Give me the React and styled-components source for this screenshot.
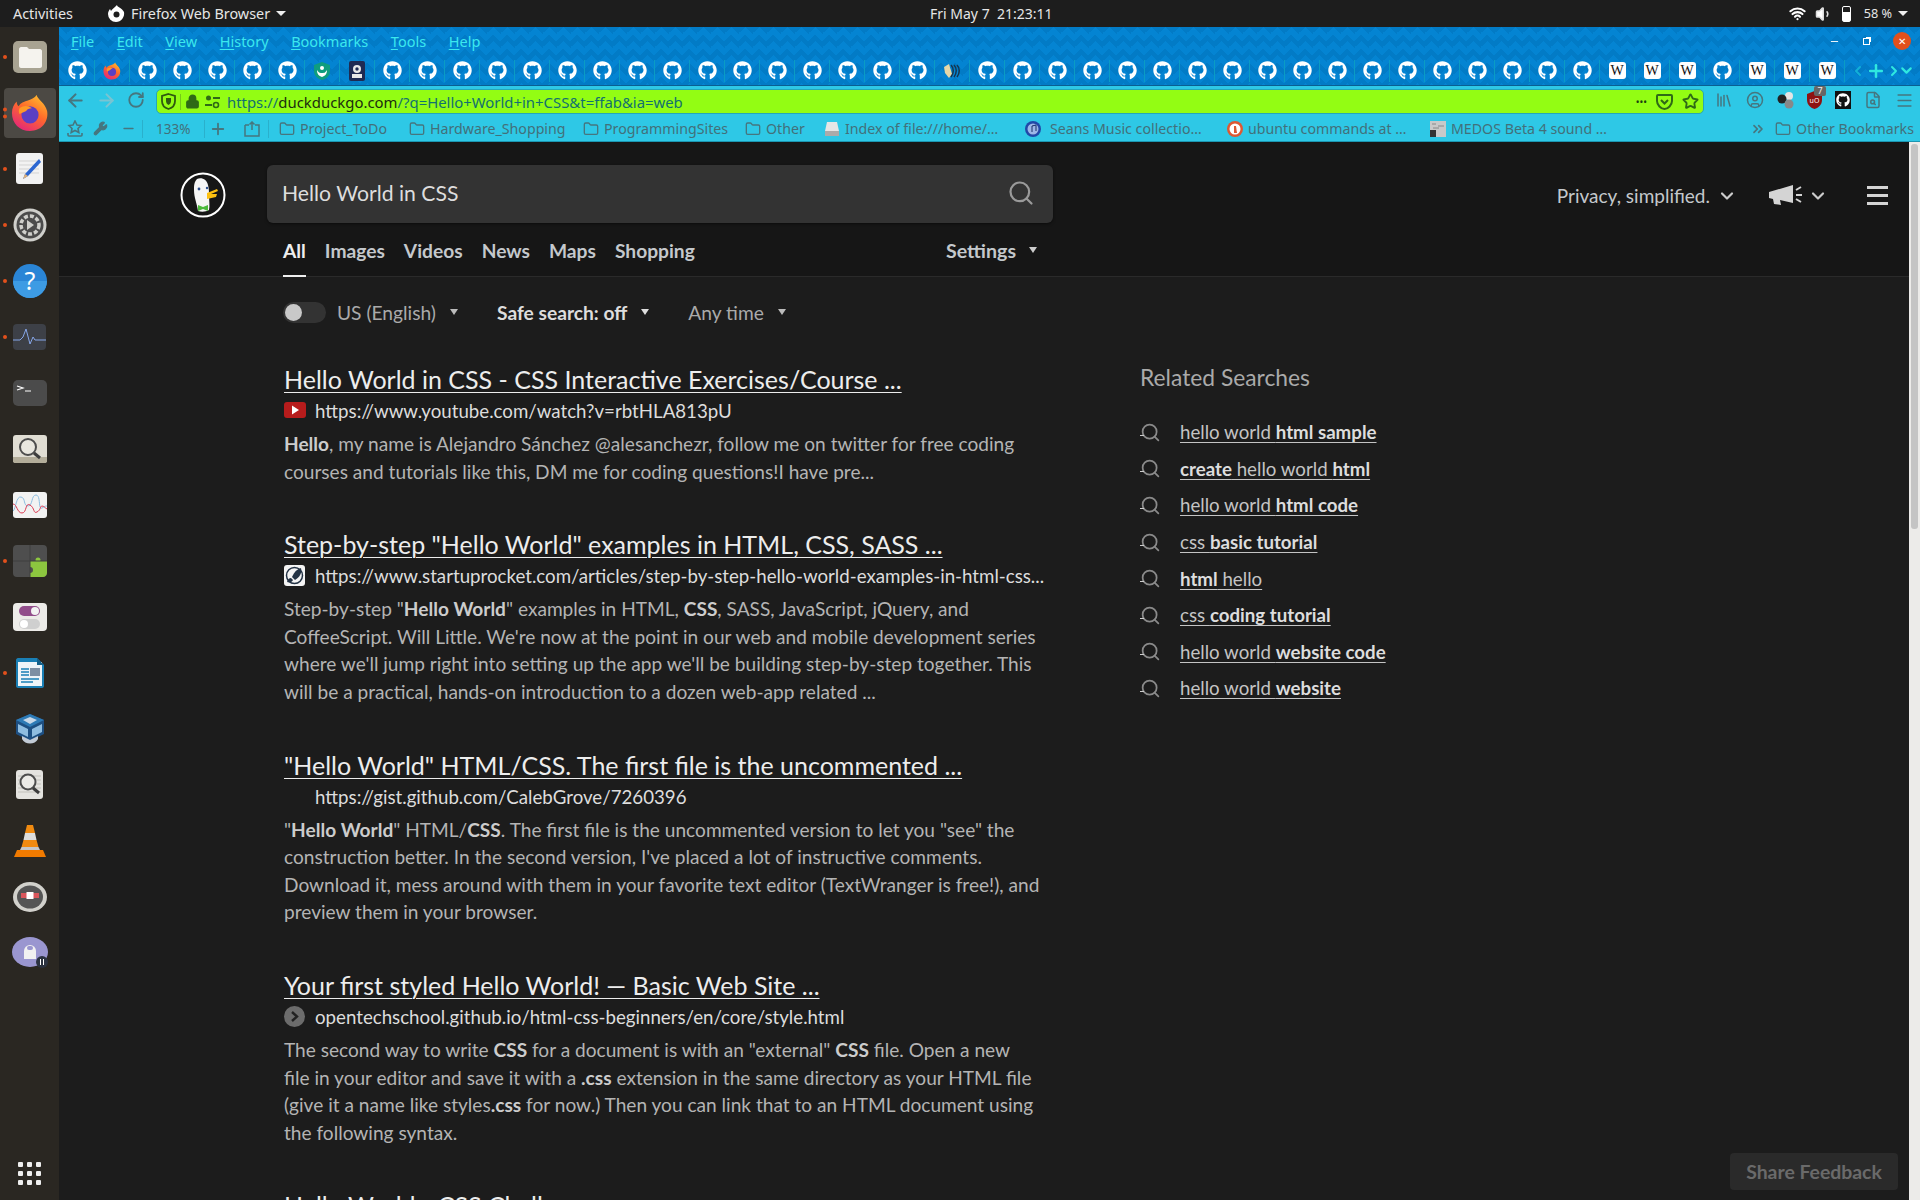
import styled, { createGlobalStyle } from 'styled-components';
import { FaGithub } from 'react-icons/fa';
import {
    ArrowLeft, ArrowRight, RotateCw, Lock, Star, Menu, Search, ChevronDown, ChevronLeft, ChevronRight,
    ChevronsRight, Minus, Plus, Folder, Wrench, Volume1, Wifi, UserCircle, FileSearch, Library
} from 'lucide-react';

const UI_FONT = `"Noto Sans", "Open Sans", sans-serif`;
const PAGE_FONT = `Lato, "Open Sans", sans-serif`;

const Global = createGlobalStyle`
    html, body { margin: 0; padding: 0; height: 1200px; overflow: hidden; background: #1c1c1c; }
    * { box-sizing: border-box; }
`;

/* ---------- data ---------- */

const tabs = [
    'g','ff','g','g','g','g','g','shield','lock','g','g','g','g','g','g','g','g','g','g','g','g','g','g','g','g',
    'steem','g','g','g','g','g','g','g','g','g','g','g','g','g','g','g','g','g','g','w','w','w','g','w','w','w'
];

const folders = [
    { kind: 'folder', label: 'Project_ToDo', width: 130 },
    { kind: 'folder', label: 'Hardware_Shopping', width: 174 },
    { kind: 'folder', label: 'ProgrammingSites', width: 162 },
    { kind: 'folder', label: 'Other', width: 79 },
    { kind: 'disk', label: 'Index of file:///home/…', width: 201 },
    { kind: 'itunes', label: 'Seans Music collectio…', width: 202, gap: 9 },
    { kind: 'ddg', label: 'ubuntu commands at …', width: 203 },
    { kind: 'medos', label: 'MEDOS Beta 4 sound …', width: 190 },
];

const results = [
    {
        title: 'Hello World in CSS - CSS Interactive Exercises/Course ...',
        url: 'https://www.youtube.com/watch?v=rbtHLA813pU',
        icon: 'yt',
        lines: [
            <><b>Hello</b>, my name is Alejandro Sánchez @alesanchezr, follow me on twitter for free coding</>,
            <>courses and tutorials like this, DM me for coding questions!I have pre...</>,
        ],
    },
    {
        title: 'Step-by-step "Hello World" examples in HTML, CSS, SASS ...',
        url: 'https://www.startuprocket.com/articles/step-by-step-hello-world-examples-in-html-css...',
        icon: 'rocket',
        lines: [
            <>Step-by-step "<b>Hello World</b>" examples in HTML, <b>CSS</b>, SASS, JavaScript, jQuery, and</>,
            <>CoffeeScript. Will Little. We're now at the point in our web and mobile development series</>,
            <>where we'll jump right into setting up the app we'll be building step-by-step together. This</>,
            <>will be a practical, hands-on introduction to a dozen web-app related ...</>,
        ],
    },
    {
        title: '"Hello World" HTML/CSS. The first file is the uncommented ...',
        url: 'https://gist.github.com/CalebGrove/7260396',
        icon: null,
        lines: [
            <>"<b>Hello World</b>" HTML/<b>CSS</b>. The first file is the uncommented version to let you "see" the</>,
            <>construction better. In the second version, I've placed a lot of instructive comments.</>,
            <>Download it, mess around with them in your favorite text editor (TextWranger is free!), and</>,
            <>preview them in your browser.</>,
        ],
    },
    {
        title: 'Your first styled Hello World! — Basic Web Site ...',
        url: 'opentechschool.github.io/html-css-beginners/en/core/style.html',
        icon: 'ots',
        lines: [
            <>The second way to write <b>CSS</b> for a document is with an "external" <b>CSS</b> file. Open a new</>,
            <>file in your editor and save it with a <b>.css</b> extension in the same directory as your HTML file</>,
            <>(give it a name like styles<b>.css</b> for now.) Then you can link that to an HTML document using</>,
            <>the following syntax.</>,
        ],
    },
];

const related = [
    <>hello world <b>html sample</b></>,
    <><b>create</b> hello world <b>html</b></>,
    <>hello world <b>html code</b></>,
    <>css <b>basic tutorial</b></>,
    <><b>html</b> hello</>,
    <>css <b>coding tutorial</b></>,
    <>hello world <b>website code</b></>,
    <>hello world <b>website</b></>,
];

/* ---------- drawings ---------- */

const FirefoxLogo = ({ size = 40 }) => (
    <svg width={size} height={size} viewBox="0 0 40 40">
        <defs>
            <linearGradient id="ffg" x1="0.8" y1="0" x2="0.2" y2="1">
                <stop offset="0" stopColor="#ffbd2e" />
                <stop offset="0.45" stopColor="#ff6a2b" />
                <stop offset="1" stopColor="#e3217f" />
            </linearGradient>
        </defs>
        <path d="M27 1c1 5 9 8 11 17 2 11-6 21-18 21C9 39 1 31 1 20c0-5 2-9 5-12 0 3 1 4 2 5 2-4 6-5 9-6 4-1 8-3 10-6z" fill="url(#ffg)" />
        <circle cx="20" cy="22" r="9" fill="#5b3fc4" />
        <path d="M9 15c4-3 9-3 13 0-3 0-5 1-6 3l-7 3c-1-2-1-4 0-6z" fill="#ff9a26" />
    </svg>
);

const DuckLogo = () => (
    <svg width="46" height="46" viewBox="0 0 46 46">
        <ellipse cx="23" cy="23" rx="21.5" ry="21.5" fill="#161616" stroke="#fff" strokeWidth="2" />
        <path d="M17 7c5-2 10 1 11 6 1 4 1 7 1 10 0 5 1 11 0 15-3 2-8 2-11 1-1-8-4-13-4-21 0-4 0-8 3-11z" fill="#f5f5f5" />
        <circle cx="19" cy="17" r="1.4" fill="#2d4f8e" />
        <circle cx="27" cy="16" r="1.2" fill="#2d4f8e" />
        <path d="M27 21l10-4 1 2-7 3 6 0-1 3-9 2z" fill="#fdc010" />
        <path d="M18 33l5 2 5-2v6l-5-2-5 2z" fill="#4cba3c" />
    </svg>
);

const GsIcon = styled.div`
    width: 34px;
    height: ${p => p.$h || 32}px;
    border-radius: 5px;
    background: ${p => p.$bg};
    display: flex;
    align-items: center;
    justify-content: center;
`;

const dockApps = [
    { dots: 1, el: <GsIcon $bg="#a8a392"><svg width="24" height="21" viewBox="0 0 24 21"><path d="M1 2c0-1 1-2 2-2h6l2 2h11c1 0 2 1 2 2v15c0 1-1 2-2 2H3c-1 0-2-1-2-2z" fill="#f5f3ee" /></svg></GsIcon> },
    { dots: 2, active: true, el: <FirefoxLogo size={38} /> },
    { dots: 1, el: <svg width="28" height="32" viewBox="0 0 28 32"><rect width="27" height="31" rx="3" fill="#f2f2f2" /><path d="M3 8h20M3 12h20M3 16h20M3 20h20" stroke="#d3d3d3" /><path d="M23 6l2 3-13 14-5 3 2-5z" fill="#2b66d1" /><path d="M7 26l2-5 3 2z" fill="#e0b27a" /></svg> },
    { dots: 1, el: <svg width="34" height="34" viewBox="0 0 34 34"><circle cx="17" cy="17" r="16.500" fill="#cfcfcb" /><circle cx="17" cy="17" r="13.500" fill="#4b4b4b" /><circle cx="17" cy="17" r="9" fill="none" stroke="#cfcfcb" strokeWidth="3.500" strokeDasharray="4 2" /><path d="M14 12l7 5-7 5z" fill="#cfcfcb" /></svg> },
    { dots: 1, el: <svg width="34" height="34" viewBox="0 0 34 34"><circle cx="17" cy="17" r="17" fill="#2a85d6" /><path d="M0 17a17 17 0 0 0 34 0z" fill="#3d9be4" /><text x="17" y="26" textAnchor="middle" fill="#fff" fontSize="25" fontFamily="Noto Sans">?</text></svg> },
    { dots: 1, el: <svg width="34" height="26" viewBox="0 0 34 26"><rect width="33" height="26" rx="4" fill="#3d4047" /><path d="M0 16h7l3-3 3-8 4 15 3-7 2 3h11" fill="none" stroke="#86a6e8" strokeWidth="1" /></svg> },
    { dots: 0, el: <GsIcon $bg="#4b4b4b" $h={26}><svg width="28" height="22" viewBox="0 0 28 22"><path d="M1 4l6 2-6 2M9 9h6" stroke="#fff" fill="none" strokeWidth="1.200" /></svg></GsIcon> },
    { dots: 0, el: <svg width="34" height="28" viewBox="0 0 34 28"><rect width="34" height="28" rx="3" fill="#e0ddd3" /><path d="M0 22h34v4c0 1-1 2-2 2H2c-1 0-2-1-2-2z" fill="#b3ad9a" /><circle cx="15" cy="12" r="8" fill="#e9e7df" stroke="#4d4d4d" strokeWidth="2" /><path d="M21 18l6 5" stroke="#3c3c3c" strokeWidth="3" /></svg> },
    { dots: 0, el: <svg width="34" height="26" viewBox="0 0 34 26"><rect width="34" height="26" rx="3" fill="#f2f2f2" /><path d="M0 19c3-2 3-15 8-14s2 9 7 9 3-11 8-11 2 15 6 13 3-2 5-2" fill="none" stroke="#8bbde0" /><path d="M0 12c4 0 4 9 9 9s3-11 8-8 3 9 7 7 3-6 5-6 3 2 5 3" fill="none" stroke="#dc3a52" /></svg> },
    { dots: 1, el: <svg width="34" height="32" viewBox="0 0 34 32"><rect width="34" height="32" rx="4" fill="#4e4e4e" /><path d="M17 16h17v12c0 2-2 4-4 4H17v-4a3 3 0 0 0 0-6z" fill="#8cc63f" /><circle cx="25" cy="15" r="2.500" fill="#8cc63f" /><path d="M0 16h34M17 0v32" stroke="#3e3e3e" /></svg> },
    { dots: 0, el: <svg width="34" height="28" viewBox="0 0 34 28"><rect width="34" height="28" rx="4" fill="#ecebe8" /><rect x="6" y="3" width="21" height="10" rx="5" fill="#924d8b" /><circle cx="22" cy="8" r="4" fill="#f3f3f3" /><rect x="6" y="16" width="21" height="10" rx="5" fill="#cfcfcf" /><circle cx="11" cy="21" r="4" fill="#fff" /></svg> },
    { dots: 1, el: <svg width="28" height="30" viewBox="0 0 28 30"><path d="M2 0h19l7 7v21c0 1-1 2-2 2H2c-1 0-2-1-2-2V2C0 1 1 0 2 0z" fill="#1a7fb5" /><rect x="2" y="4" width="24" height="24" fill="#eef4f8" /><path d="M21 0l7 7h-7z" fill="#14608a" /><path d="M5 11h8M5 14h8M5 17h8M5 21h18M5 24h12" stroke="#1a7fb5" strokeWidth="1.500" /><rect x="14" y="10" width="10" height="8" fill="#7d8fa3" /></svg> },
    { dots: 0, el: <svg width="32" height="32" viewBox="0 0 32 32"><path d="M16 1l14 6v14l-14 7-14-7V7z" fill="#1d4f82" /><path d="M2 7l14 7 14-7-14-6z" fill="#2d7ab5" /><path d="M16 4l7 3-7 4-7-4z" fill="#c8d8e8" /><path d="M4 11l10 5v8l-10-5zM18 16l10-5v8l-10 5z" fill="#8fbde0" /><path d="M8 26c3 6 13 6 16 0v-3l-8 4-8-4z" fill="#c2cbd6" /></svg> },
    { dots: 0, el: <svg width="28" height="30" viewBox="0 0 28 30"><rect width="27" height="29" rx="3" fill="#e4e3df" /><path d="M2 6h23M2 10h23M2 14h23M2 18h23M2 22h23" stroke="#c2c1bb" /><circle cx="12" cy="12" r="7.500" fill="#ecebe7" stroke="#4d4d4d" strokeWidth="2" /><path d="M17 18l6 5" stroke="#3c3c3c" strokeWidth="3" /></svg> },
    { dots: 0, el: <svg width="32" height="32" viewBox="0 0 32 32"><path d="M13 0h6l2 8H11z" fill="#f08a10" /><path d="M11 8h10l1.500 7h-13z" fill="#ddd" /><path d="M9.500 15h13l2 7h-17z" fill="#f08a10" /><path d="M7.500 22h17l1.500 3H6z" fill="#c6c6c6" /><path d="M3 25h26l3 7H0z" fill="#f07a00" /></svg> },
    { dots: 0, el: <svg width="34" height="30" viewBox="0 0 34 30"><ellipse cx="17" cy="15" rx="17" ry="15" fill="#d2d1cc" /><ellipse cx="17" cy="15" rx="13" ry="11.500" fill="#555" /><path d="M8 11h18v5H8z" fill="#d9575c" /><rect x="13.500" y="10" width="7" height="7" fill="#fff" /></svg> },
    { dots: 0, el: <svg width="36" height="32" viewBox="0 0 36 32"><ellipse cx="18" cy="15" rx="18" ry="15" fill="#9a96d0" /><path d="M12 14a6 6 0 0 1 12 0v8H12z" fill="#f1f1f1" /><rect x="15" y="9" width="6" height="4" rx="2" fill="#9a96d0" /><circle cx="30" cy="25" r="6" fill="#2b3240" /><path d="M28.500 28v-6M31.500 22v6" stroke="#fff" /></svg> },
];

/* ---------- components ---------- */

function TopPanel() {
    return (
        <Panel>
            <PanelLeft>
                <PanelText>Activities</PanelText>
                <AppMenu>
                    <svg width="17" height="17" viewBox="0 0 17 17"><path d="M9 0c0 2 5 3 7 7 1 5-3 10-8 10a8 8 0 0 1-8-8c0-2 1-4 2-5l1 2c1-2 3-3 6-6z" fill="#fff" /><circle cx="8.500" cy="9.500" r="3" fill="#1d1d1d" /></svg>
                    <PanelText>Firefox Web Browser</PanelText>
                    <Caret />
                </AppMenu>
            </PanelLeft>
            <Clock>Fri May 7&nbsp; 21:23:11</Clock>
            <PanelRight>
                <Wifi size={17} color="#fff" strokeWidth={3} />
                <Volume1 size={18} color="#ddd" fill="#fff" />
                <BatteryBody><BatteryLevel /></BatteryBody>
                <PanelText $small>58 %</PanelText>
                <Caret />
            </PanelRight>
        </Panel>
    );
}

function Dock() {
    return (
        <DockBar>
            {dockApps.map((a, i) =>
                <DockItem key={i} $active={a.active}>
                    <Dots>{Array.from({ length: a.dots }).map((_, j) => <Dot key={j} />)}</Dots>
                    {a.el}
                </DockItem>
            )}
            <AppsGrid>{Array.from({ length: 9 }).map((_, i) => <i key={i} />)}</AppsGrid>
        </DockBar>
    );
}

function TabIcon({ kind }) {
    if (kind === 'g') return <FaGithub size={19} color="#fff" />;
    if (kind === 'ff') return <FirefoxLogo size={18} />;
    if (kind === 'w') return <WikiIcon>W</WikiIcon>;
    if (kind === 'shield') return <svg width="16" height="18" viewBox="0 0 16 18"><path d="M8 0l8 3v6c0 5-4 8-8 9-4-1-8-4-8-9V3z" fill="#0f9d7e" /><circle cx="8" cy="6" r="2" fill="#fff" /><path d="M3 8c2 3 3 3 5 3s3 0 5-3c0 4-2 6-5 7-3-1-5-3-5-7z" fill="#fff" /></svg>;
    if (kind === 'lock') return <svg width="16" height="20" viewBox="0 0 16 20"><rect width="16" height="20" rx="2" fill="#1f2a52" /><circle cx="8" cy="8" r="4" fill="#e8e8e8" /><circle cx="8" cy="8" r="1.700" fill="#1f2a52" /><rect x="3" y="13" width="10" height="4" fill="#e8e8e8" /></svg>;
    return <svg width="18" height="18" viewBox="0 0 18 18"><path d="M1 5l5-3 3 10-3 4-4-5z" fill="#e5d7a8" /><path d="M8 3c3 3 3 8 0 12M11 3c3 3 3 8 0 12M14 3c3 3 3 8 0 12" stroke="#17364f" strokeWidth="1.500" fill="none" /></svg>;
}

function TitleRow() {
    return (
        <MenuBar>
            <MenuList>
                {[['F', 'ile'], ['E', 'dit'], ['V', 'iew'], ['Hi', 'story'], ['B', 'ookmarks'], ['T', 'ools'], ['H', 'elp']].map(([a, b]) =>
                    <MenuItem key={b}><u>{a}</u>{b}</MenuItem>
                )}
            </MenuList>
            <WinButtons>
                <Minus size={11} color="#fff" />
                <RestoreIcon />
                <CloseBtn>✕</CloseBtn>
            </WinButtons>
        </MenuBar>
    );
}

function TabStrip() {
    return (
        <Tabs>
            {tabs.map((t, i) => <TabCell key={i}><TabIcon kind={t} /></TabCell>)}
            <TabTools>
                <ChevronLeft size={16} color="#12b0d8" strokeWidth={3} />
                <Plus size={20} color="#2fe8e0" strokeWidth={3} />
                <ChevronRight size={16} color="#2fe8e0" strokeWidth={3} />
                <ChevronDown size={17} color="#2fe8e0" strokeWidth={3} />
            </TabTools>
        </Tabs>
    );
}

function NavBar() {
    return (
        <Nav>
            <NavButtons>
                <ArrowLeft size={21} color="#46767f" strokeWidth={2.400} />
                <ArrowRight size={21} color="#79c4d2" strokeWidth={2.400} />
                <RotateCw size={18} color="#46767f" strokeWidth={2.400} />
            </NavButtons>
            <UrlBar>
                <svg width="15" height="17" viewBox="0 0 15 17"><path d="M7.500 1L14 3v5c0 4-3 7-6.500 8C4 15 1 12 1 8V3z" fill="none" stroke="#2f5a10" strokeWidth="1.800" /><path d="M5 5h5v3c0 2-1 3-2.500 4C6 11 5 10 5 8z" fill="#2f5a10" /></svg>
                <UrlSep />
                <Lock size={15} color="#2f6a16" fill="#2f6a16" strokeWidth={2.400} />
                <svg width="15" height="15" viewBox="0 0 15 15"><circle cx="3.500" cy="4" r="2.500" fill="#2f6a16" /><path d="M8 4h7M0 11h7" stroke="#2f6a16" strokeWidth="2" /><circle cx="11" cy="11" r="2.500" fill="none" stroke="#2f6a16" strokeWidth="1.600" /></svg>
                <UrlText>https://<b>duckduckgo.com</b>/?q=Hello+World+in+CSS&amp;t=ffab&amp;ia=web</UrlText>
                <UrlEnd>
                    <UrlDots>•••</UrlDots>
                    <svg width="17" height="16" viewBox="0 0 17 16"><path d="M2 1h13c1 0 1 1 1 1v5c0 4-4 8-7.500 8S1 11 1 7V2s0-1 1-1z" fill="none" stroke="#2f6a16" strokeWidth="2" /><path d="M5 6l3.500 3.500L12 6" fill="none" stroke="#2f6a16" strokeWidth="2" /></svg>
                    <Star size={17} color="#2f6a16" strokeWidth={2.600} />
                </UrlEnd>
            </UrlBar>
            <NavRight>
                <Library size={18} color="#46767f" />
                <UserCircle size={18} color="#46767f" />
                <svg width="18" height="18" viewBox="0 0 18 18"><circle cx="12" cy="5" r="4" fill="#e5e5e5" /><circle cx="5" cy="8" r="4.500" fill="#222" /><circle cx="12" cy="13" r="4.500" fill="#888" /></svg>
                <UblockWrap>
                    <svg width="15" height="18" viewBox="0 0 15 18"><path d="M7.500 0L15 3v6c0 5-4 8-7.500 9C4 17 0 14 0 9V3z" fill="#8e1212" /><text x="7.500" y="12" textAnchor="middle" fontSize="7" fill="#fff" fontFamily="Noto Sans">uO</text></svg>
                    <Badge>7</Badge>
                </UblockWrap>
                <GitBox><FaGithub size={14} color="#fff" /></GitBox>
                <FileSearch size={18} color="#46767f" />
                <Menu size={19} color="#46767f" />
            </NavRight>
        </Nav>
    );
}

function BookmarkIcon({ kind }) {
    if (kind === 'folder') return <Folder size={16} color="#46767f" />;
    if (kind === 'disk') return <svg width="16" height="16" viewBox="0 0 16 16"><path d="M3 1h10l2 9H1z" fill="#e6e6e6" /><rect x="1" y="10" width="14" height="5" fill="#aaa" /></svg>;
    if (kind === 'itunes') return <svg width="16" height="16" viewBox="0 0 16 16"><circle cx="8" cy="8" r="8" fill="#2148a8" /><circle cx="8" cy="8" r="5.500" fill="#9db7e8" /><path d="M7 11V5l4-1v6" stroke="#1a2f66" fill="none" /></svg>;
    if (kind === 'ddg') return <svg width="16" height="16" viewBox="0 0 16 16"><circle cx="8" cy="8" r="8" fill="#de5833" /><circle cx="8" cy="8" r="5.500" fill="#fff" /><path d="M7 5h2l1 7H7z" fill="#de5833" /></svg>;
    return <svg width="16" height="16" viewBox="0 0 16 16"><rect width="16" height="16" fill="#c9c9c9" /><path d="M2 3h4M8 5h6M3 7h6" stroke="#888" /><rect y="9" width="6" height="7" fill="#333" /></svg>;
}

function BookmarksBar() {
    return (
        <Bookmarks>
            <BmTools>
                <svg width="16" height="17" viewBox="0 0 16 17"><path d="M8 1l2 4 4 .5-3 3 .8 4L8 10.500 4.200 12.500l.8-4-3-3 4-.5z" fill="none" stroke="#46767f" strokeWidth="1.600" /><path d="M1 13v2c0 1 1 1 1 1h12s1 0 1-1v-2" fill="none" stroke="#46767f" strokeWidth="1.600" /></svg>
                <ToolSlot $ml={10}><Wrench size={15} color="#46767f" fill="#46767f" /></ToolSlot>
                <ToolSlot $ml={13}><Minus size={15} color="#46767f" strokeWidth={2.600} /></ToolSlot>
                <BmSep $ml={6} />
                <ToolSlot $ml={13}><Zoom>133%</Zoom></ToolSlot>
                <BmSep $ml={14} />
                <ToolSlot $ml={4}><Plus size={18} color="#46767f" strokeWidth={2.400} /></ToolSlot>
                <ToolSlot $ml={17}><svg width="16" height="16" viewBox="0 0 16 16"><path d="M1 4h4v-0M11 4h4v11H1V4M8 9V1M5.500 3.500L8 1l2.500 2.500" fill="none" stroke="#46767f" strokeWidth="1.500" /></svg></ToolSlot>
                <BmSep $ml={8} />
            </BmTools>
            {folders.map(f =>
                <Bm key={f.label} $w={f.width} $gap={f.gap}>
                    <BookmarkIcon kind={f.kind} />
                    <span>{f.label}</span>
                </Bm>
            )}
            <BmRight>
                <ChevronsRight size={16} color="#46767f" strokeWidth={2.600} />
                <Bm>
                    <Folder size={16} color="#46767f" />
                    <span>Other Bookmarks</span>
                </Bm>
            </BmRight>
        </Bookmarks>
    );
}

function Favicon({ kind }) {
    if (kind === 'yt') return <svg width="22" height="20" viewBox="0 0 22 20"><rect y="1" width="22" height="16" rx="3" fill="#b71c1c" /><path d="M8 4.500l7 4.500-7 4.500z" fill="#fff" /></svg>;
    if (kind === 'rocket') return <svg width="22" height="22" viewBox="0 0 22 22"><rect width="21" height="21" rx="3" fill="#f4f4f4" /><circle cx="10.500" cy="10.500" r="8" fill="none" stroke="#233244" strokeWidth="1.500" /><path d="M17 3c1 5-1 9-6 12l-3-3c2-5 5-8 9-9z" fill="#233244" /><path d="M3 17c1-3 2-4 4-4l2 2c-1 2-3 3-6 2z" fill="#233244" /></svg>;
    if (kind === 'ots') return <svg width="21" height="21" viewBox="0 0 21 21"><circle cx="10.500" cy="10.500" r="10.500" fill="#6c6c6c" /><path d="M8 6l5 4.500L8 15" fill="none" stroke="#222" strokeWidth="2.400" /></svg>;
    return null;
}

function Result({ r }) {
    return (
        <ResultWrap>
            <ResultTitle>{r.title}</ResultTitle>
            {r.url && <UrlRow><FaviconCell><Favicon kind={r.icon} /></FaviconCell>{r.url}</UrlRow>}
            <Snippet>
                {r.lines.map((l, i) => <SnippetLine key={i}>{l}</SnippetLine>)}
            </Snippet>
        </ResultWrap>
    );
}

function SerpHeader() {
    return (
        <Header>
            <LogoCell><DuckLogo /></LogoCell>
            <HeaderMain>
                <SearchBox>
                    <span>Hello World in CSS</span>
                    <Search size={28} color="#9a9a9a" strokeWidth={1.900} />
                </SearchBox>
                <NavTabs>
                    <NavTab $on>All</NavTab>
                    <NavTab>Images</NavTab>
                    <NavTab>Videos</NavTab>
                    <NavTab>News</NavTab>
                    <NavTab>Maps</NavTab>
                    <NavTab>Shopping</NavTab>
                    <Settings>Settings<SmallCaret $c="#ccc" /></Settings>
                </NavTabs>
            </HeaderMain>
            <HeaderRight>
                <Privacy>Privacy, simplified.</Privacy>
                <ChevronDown size={20} color="#ccc" strokeWidth={2.600} />
                <Horn>
                    <svg width="34" height="22" viewBox="0 0 34 22"><path d="M0 7l24-7v18L11 15l1 5-7-1-1-5-4-1z" fill="#d4d4d4" /><path d="M27 5l5-3M27 10h6M27 14l5 3" stroke="#d4d4d4" strokeWidth="2" /></svg>
                </Horn>
                <ChevronDown size={20} color="#ccc" strokeWidth={2.600} />
                <Burger><i /><i /><i /></Burger>
            </HeaderRight>
        </Header>
    );
}

export default function App() {
    return (
        <>
            <Global />
            <Screen>
                <TopPanel />
                <Body>
                    <Dock />
                    <Browser>
                        <Chrome>
                            <Themed>
                                <TitleRow />
                                <TabStrip />
                            </Themed>
                            <NavBar />
                            <BookmarksBar />
                        </Chrome>
                        <PageRow>
                            <Page>
                                <SerpHeader />
                                <Filters>
                                    <Toggle><i /></Toggle>
                                    <Filter>US (English)<SmallCaret $c="#bbb" /></Filter>
                                    <Filter $bold>Safe search: off<SmallCaret $c="#ddd" /></Filter>
                                    <Filter>Any time<SmallCaret $c="#bbb" /></Filter>
                                </Filters>
                                <Columns>
                                    <Results>
                                        {results.map(r => <Result key={r.title} r={r} />)}
                                        <ResultTitle>Hello World - CSS Challenge</ResultTitle>
                                    </Results>
                                    <Related>
                                        <RelatedTitle>Related Searches</RelatedTitle>
                                        {related.map((t, i) =>
                                            <RelatedRow key={i}>
                                                <RelatedIcon><Search size={21} color="#8a8a8a" strokeWidth={2} /></RelatedIcon>
                                                <RelatedLink>{t}</RelatedLink>
                                            </RelatedRow>
                                        )}
                                    </Related>
                                </Columns>
                                <Feedback>Share Feedback</Feedback>
                            </Page>
                            <Scrollbar><Thumb /></Scrollbar>
                        </PageRow>
                    </Browser>
                </Body>
            </Screen>
        </>
    );
}

/* ---------- styles ---------- */

const Screen = styled.div`
    width: 1920px;
    height: 1200px;
    display: flex;
    flex-direction: column;
    overflow: hidden;
`;

const Panel = styled.header`
    height: 27px;
    flex: none;
    background: #1d1d1d;
    display: flex;
    align-items: center;
    position: relative;
    padding: 0 12px 0 13px;
    font-family: ${UI_FONT};
    color: #e6e6e6;
`;

const PanelLeft = styled.div`
    display: flex;
    align-items: center;
    gap: 35px;
`;

const AppMenu = styled.div`
    display: flex;
    align-items: center;
    gap: 6px;
`;

const PanelText = styled.span`
    font-size: ${p => p.$small ? '12.7px' : '14.4px'};
    line-height: 27px;
    margin: ${p => p.$small ? '0 -3px 0 4px' : '0'};
`;

const Caret = styled.span`
    width: 0;
    height: 0;
    border-left: 5px solid transparent;
    border-right: 5px solid transparent;
    border-top: 5px solid #eee;
`;

const Clock = styled.div`
    position: absolute;
    left: 930px;
    font-size: 14px;
    white-space: nowrap;
`;

const PanelRight = styled.div`
    margin-left: auto;
    display: flex;
    align-items: center;
    gap: 9px;
`;

const BatteryBody = styled.div`
    width: 9px;
    height: 16px;
    border: 1.5px solid #fff;
    border-radius: 2px;
    display: flex;
    align-items: flex-end;
`;

const BatteryLevel = styled.div`
    width: 100%;
    height: 58%;
    background: #fff;
`;

const Body = styled.div`
    flex: 1;
    display: flex;
    min-height: 0;
`;

const DockBar = styled.aside`
    width: 59px;
    flex: none;
    background: #2a2722;
    display: flex;
    flex-direction: column;
    align-items: center;
    padding-top: 2px;
    position: relative;
`;

const DockItem = styled.div`
    width: 52px;
    height: 50px;
    margin: 3px 0;
    display: flex;
    align-items: center;
    justify-content: center;
    border-radius: 4px;
    position: relative;
    background: ${p => p.$active ? '#4c4944' : 'transparent'};
`;

const Dots = styled.div`
    position: absolute;
    left: -1px;
    top: 50%;
    transform: translateY(-50%);
    display: flex;
    flex-direction: column;
    gap: 3px;
`;

const Dot = styled.span`
    width: 4px;
    height: 4px;
    border-radius: 50%;
    background: #e2501c;
`;

const AppsGrid = styled.div`
    margin-top: auto;
    margin-bottom: 15px;
    display: grid;
    grid-template-columns: repeat(3, 5px);
    gap: 4px;
    i {
        width: 5px;
        height: 5px;
        border-radius: 1px;
        background: #eee;
    }
`;

const Browser = styled.main`
    flex: 1;
    display: flex;
    flex-direction: column;
    min-width: 0;
`;

const Chrome = styled.div`
    flex: none;
    font-family: ${UI_FONT};
`;

const Themed = styled.div`
    height: 59px;
    background-color: #0484d2;
    background-image:
        linear-gradient(135deg, #027bc6 25%, transparent 25%),
        linear-gradient(225deg, #027bc6 25%, transparent 25%),
        linear-gradient(315deg, #027bc6 25%, transparent 25%),
        linear-gradient(45deg, #027bc6 25%, transparent 25%);
    background-size: 14px 14px;
    background-position: -7px 0, -7px 0, 0 0, 0 0;
    border-bottom: 1px solid #0a5f92;
`;

const MenuBar = styled.div`
    height: 28px;
    display: flex;
    align-items: center;
    padding: 0 9px 0 12px;
`;

const MenuList = styled.nav`
    display: flex;
    gap: 22.6px;
`;

const MenuItem = styled.span`
    color: #3be8ef;
    font-size: 14.5px;
    u { text-underline-offset: 2px; }
`;

const WinButtons = styled.div`
    margin-left: auto;
    display: flex;
    align-items: center;
    gap: 23px;
`;

const RestoreIcon = styled.span`
    width: 7px;
    height: 7px;
    border: 1px solid #fff;
    box-shadow: 2px -2px 0 -1px #fff;
`;

const CloseBtn = styled.span`
    width: 18px;
    height: 18px;
    border-radius: 50%;
    background: #e2501c;
    color: #fff;
    font-size: 10px;
    display: flex;
    align-items: center;
    justify-content: center;
`;

const Tabs = styled.div`
    height: 30px;
    padding: 1px 0 0 1px;
    display: flex;
    align-items: center;
    position: relative;
`;

const TabCell = styled.div`
    width: 35px;
    height: 22px;
    flex: none;
    display: flex;
    align-items: center;
    justify-content: center;
    border-right: 1px solid #0a9cc4;
`;

const WikiIcon = styled.span`
    width: 17px;
    height: 17px;
    border-radius: 3px;
    background: #fff;
    color: #111;
    font: 14px/17px "Liberation Serif", serif;
    text-align: center;
`;

const TabTools = styled.div`
    margin-left: 5px;
    display: flex;
    align-items: center;
    & > svg:last-child { margin-left: -4px; }
`;

const Nav = styled.div`
    height: 28px;
    background: #2ec8e6;
    display: flex;
    align-items: center;
`;

const NavButtons = styled.div`
    width: 97px;
    flex: none;
    padding-left: 6px;
    display: flex;
    align-items: center;
    gap: 10px;
`;

const UrlBar = styled.div`
    width: 1548px;
    height: 25px;
    flex: none;
    margin-top: 3px;
    background: #93fd13;
    border: 1px solid #26a6b8;
    border-radius: 5px;
    padding: 0 4px 0 4px;
    display: flex;
    align-items: center;
    gap: 5px;
`;

const UrlSep = styled.span`
    width: 1px;
    height: 16px;
    background: #74c818;
    margin: 0 -1px;
`;

const UrlText = styled.span`
    font-size: 14.9px;
    margin-left: 2px;
    color: #127070;
    white-space: nowrap;
    b { font-weight: 400; color: #1c2d10; }
`;

const UrlEnd = styled.div`
    margin-left: auto;
    display: flex;
    align-items: center;
    gap: 9px;
`;

const UrlDots = styled.span`
    font-size: 10px;
    color: #1c4010;
`;

const NavRight = styled.div`
    flex: 1;
    padding: 0 6px 0 11px;
    display: flex;
    align-items: center;
    justify-content: space-between;
`;

const UblockWrap = styled.div`
    position: relative;
    display: flex;
`;

const Badge = styled.span`
    position: absolute;
    top: -5px;
    left: 7px;
    background: #666;
    color: #eee;
    font-size: 9px;
    line-height: 10px;
    padding: 0 3px;
    border-radius: 2px;
`;

const GitBox = styled.div`
    width: 16px;
    height: 18px;
    background: #111;
    display: flex;
    align-items: center;
    justify-content: center;
`;

const Bookmarks = styled.div`
    height: 28px;
    background: #2ec8e6;
    border-bottom: 1px solid #1b96b2;
    display: flex;
    align-items: center;
    color: #42707a;
    font-size: 14.2px;
    padding: 2px 0 0 8px;
`;

const BmTools = styled.div`
    width: 212px;
    flex: none;
    display: flex;
    align-items: center;
`;

const ToolSlot = styled.span`
    display: flex;
    margin-left: ${p => p.$ml}px;
`;

const BmSep = styled.span`
    width: 1px;
    height: 18px;
    background: #2ab0cc;
    margin-left: ${p => p.$ml}px;
`;

const Zoom = styled.span`
    font-size: 13.5px;
`;

const Bm = styled.div`
    width: ${p => p.$w ? `${p.$w}px` : 'auto'};
    flex: none;
    display: flex;
    align-items: center;
    gap: ${p => p.$gap || 5}px;
    white-space: nowrap;
`;

const BmRight = styled.div`
    margin-left: auto;
    padding-right: 6px;
    display: flex;
    align-items: center;
    gap: 9px;
`;

const PageRow = styled.div`
    flex: 1;
    display: flex;
    min-height: 0;
`;

const Page = styled.div`
    flex: 1;
    min-width: 0;
    background: #1c1c1c;
    font-family: ${PAGE_FONT};
    position: relative;
    overflow: hidden;
`;

const Scrollbar = styled.div`
    width: 11px;
    flex: none;
    background: #ecebe9;
    padding: 2px;
`;

const Thumb = styled.div`
    height: 385px;
    background: #c4c4c4;
    border-radius: 3px;
`;

const Header = styled.div`
    height: 135px;
    background: #161616;
    border-bottom: 1px solid #2a2a2a;
    display: flex;
    align-items: flex-start;
`;

const LogoCell = styled.div`
    width: 208px;
    flex: none;
    padding: 30px 0 0 121px;
`;

const HeaderMain = styled.div`
    width: 786px;
    flex: none;
    padding-top: 23px;
    display: flex;
    flex-direction: column;
`;

const SearchBox = styled.div`
    height: 58px;
    background: #333;
    border-radius: 6px;
    box-shadow: 0 1px 3px rgba(0, 0, 0, 0.5);
    display: flex;
    align-items: center;
    justify-content: space-between;
    padding: 0 18px 3px 15px;
    color: #ddd;
    font-size: 21.2px;
`;

const NavTabs = styled.div`
    height: 54px;
    display: flex;
    align-items: stretch;
    padding-left: 16px;
    gap: 19px;
`;

const NavTab = styled.span`
    display: flex;
    align-items: center;
    font-size: 19.2px;
    font-weight: 700;
    color: ${p => p.$on ? '#eee' : '#c4c8cc'};
    border-bottom: 2px solid ${p => p.$on ? '#eee' : 'transparent'};
    padding-top: 2px;
`;

const Settings = styled(NavTab)`
    margin-left: auto;
    padding-right: 16px;
    gap: 13px;
    font-size: 19.6px;
`;

const SmallCaret = styled.span`
    width: 0;
    height: 0;
    border-left: 4.5px solid transparent;
    border-right: 4.5px solid transparent;
    border-top: 6px solid ${p => p.$c};
`;

const HeaderRight = styled.div`
    margin-left: auto;
    padding: 42px 21px 0 0;
    display: flex;
    align-items: center;
    gap: 7px;
`;

const Privacy = styled.span`
    font-size: 19px;
    color: #c4c8cc;
`;

const Horn = styled.span`
    display: flex;
    margin: 0 -2px 0 25px;
`;

const Burger = styled.div`
    margin-left: 32px;
    display: flex;
    flex-direction: column;
    gap: 5px;
    i {
        width: 21px;
        height: 3px;
        background: #d4d4d4;
    }
`;

const Filters = styled.div`
    height: 86px;
    padding: 0 0 16px 224px;
    display: flex;
    align-items: center;
`;

const Toggle = styled.div`
    width: 43px;
    height: 21px;
    border-radius: 11px;
    background: #333;
    padding: 2px;
    margin-right: 11px;
    i {
        display: block;
        width: 17px;
        height: 17px;
        border-radius: 50%;
        background: #c8c8c8;
    }
`;

const Filter = styled.span`
    display: flex;
    align-items: center;
    gap: 14px;
    margin-right: 39px;
    font-size: 19.2px;
    font-weight: ${p => p.$bold ? 700 : 400};
    color: ${p => p.$bold ? '#ddd' : '#aaa'};
`;

const Columns = styled.div`
    display: flex;
    padding-left: 225px;
`;

const Results = styled.div`
    width: 856px;
    flex: none;
`;

const ResultWrap = styled.article`
    margin-bottom: 43px;
`;

const ResultTitle = styled.h2`
    margin: 0;
    font-size: 25px;
    font-weight: 400;
    line-height: 32px;
    color: #ededed;
    text-decoration: underline;
    text-decoration-thickness: 1px;
    text-underline-offset: 3px;
    white-space: nowrap;
`;

const UrlRow = styled.div`
    height: 28px;
    margin-top: 2px;
    display: flex;
    align-items: center;
    font-size: 18.7px;
    color: #ddd;
    white-space: nowrap;
`;

const FaviconCell = styled.span`
    width: 31px;
    flex: none;
    display: flex;
    align-items: center;
`;

const Snippet = styled.div`
    margin-top: 5px;
    font-size: 19.1px;
    line-height: 27.6px;
    color: #b4b4b4;
    b { font-weight: 700; color: #ccc; }
`;

const SnippetLine = styled.div`
    white-space: nowrap;
`;

const Related = styled.aside`
    flex: none;
    margin-top: -1px;
`;

const RelatedTitle = styled.h3`
    margin: 0 0 20px;
    height: 32px;
    font-size: 22.8px;
    line-height: 30px;
    font-weight: 400;
    color: #aaa;
`;

const RelatedRow = styled.div`
    height: 36.6px;
    display: flex;
    align-items: center;
`;

const RelatedIcon = styled.span`
    width: 40px;
    flex: none;
    display: flex;
    position: relative;
    &::after {
        content: "";
        position: absolute;
        left: 0;
        bottom: 7px;
        width: 4px;
        height: 1px;
        background: #ccc;
    }
`;

const RelatedLink = styled.span`
    font-size: 18.7px;
    color: #c4c4c4;
    text-decoration: underline;
    text-decoration-thickness: 1px;
    text-underline-offset: 3px;
    b { font-weight: 700; color: #ddd; }
`;

const Feedback = styled.div`
    position: absolute;
    right: 11px;
    bottom: 10px;
    width: 168px;
    height: 37px;
    border-radius: 4px;
    background: #2a2a2a;
    color: #6a6a6a;
    font-size: 19.4px;
    font-weight: 700;
    display: flex;
    align-items: center;
    justify-content: center;
`;
